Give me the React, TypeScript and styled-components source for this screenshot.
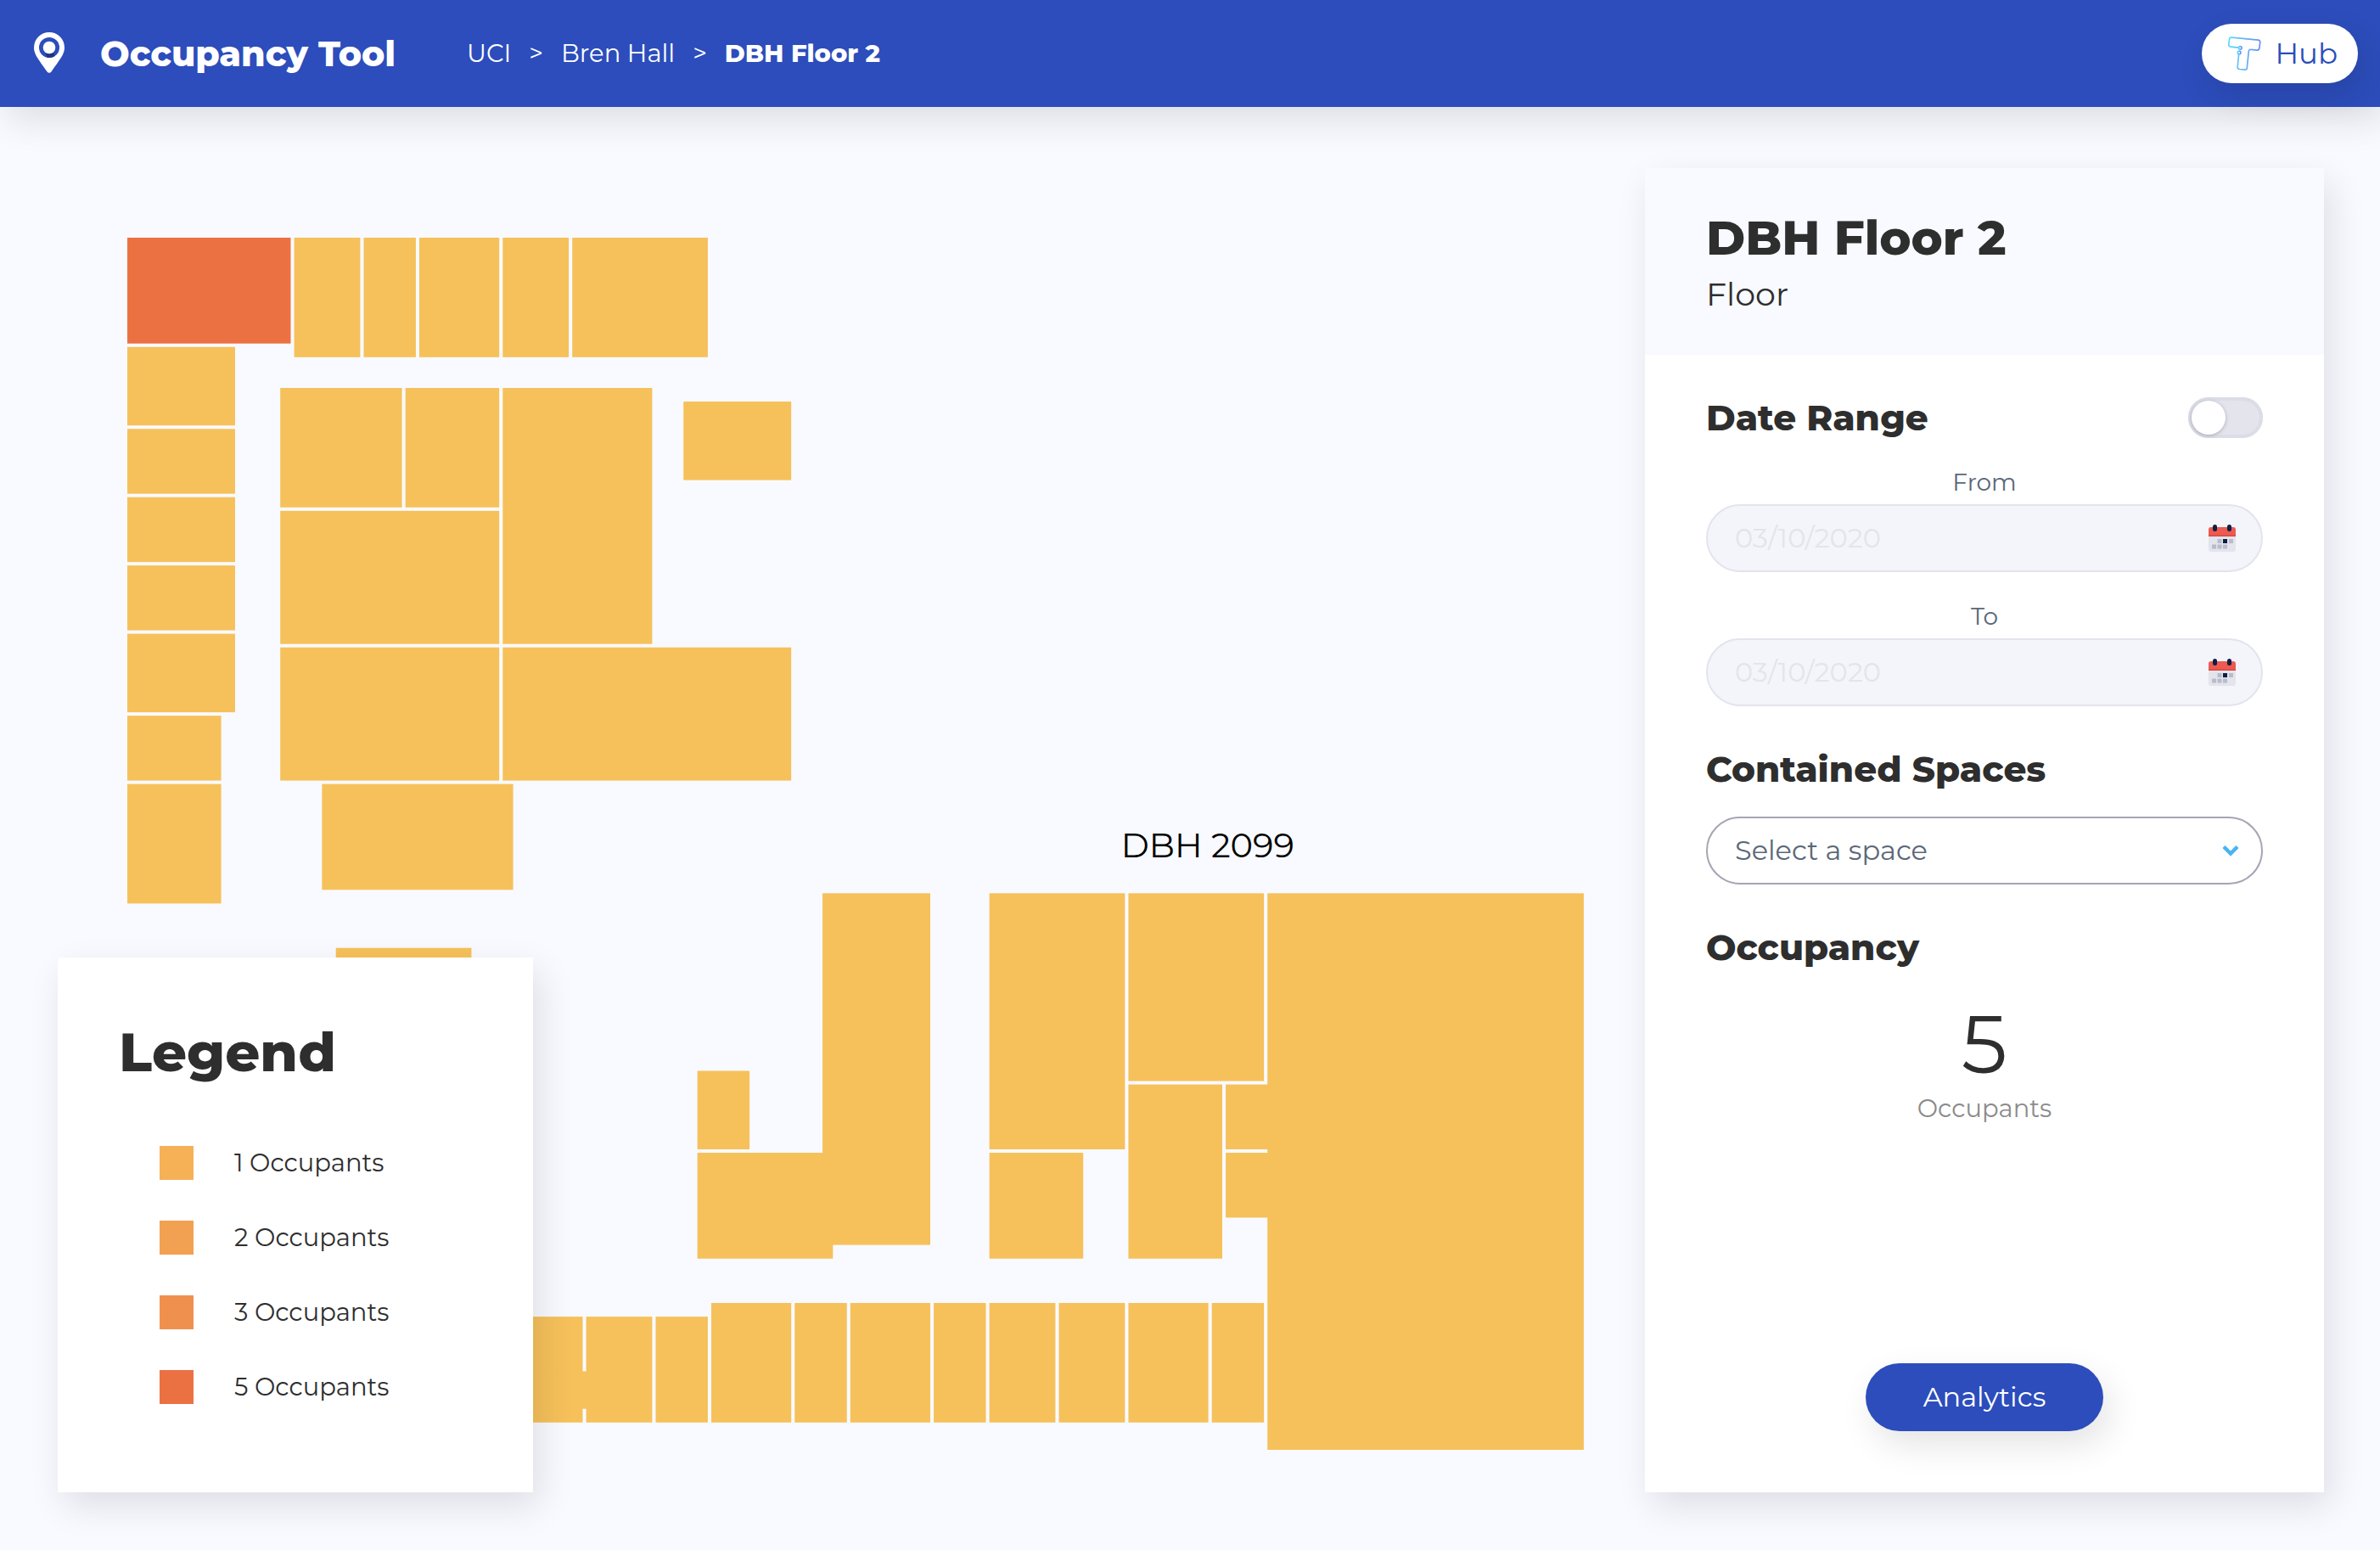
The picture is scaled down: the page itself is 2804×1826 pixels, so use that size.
import React, { useState } from "react";
import styled, { createGlobalStyle } from "styled-components";

const color = {
  primary: "#2c4dbb",
  page: "#f8faff",
  surface: "#ffffff",
  ink: "#2e2e2e",
  slate: "#5b6877",
  muted: "#8b8b8b",
  field: "#f4f5fa",
  line: "#e3e4ec",
  accent: "#4ab4f3",
};

const shadow = "8px 16px 40px rgba(0, 0, 0, 0.11)";

const GlobalStyle = createGlobalStyle`
  *, *::before, *::after { box-sizing: border-box; }
  body {
    margin: 0;
    background: ${color.page};
    color: ${color.ink};
    font-family: Montserrat, Inter, "Open Sans", sans-serif;
    font-size: 29px;
    line-height: 36px;
  }
  button, input, select { font: inherit; }
  h1, h2, h3, p, ul, ol { margin: 0; padding: 0; }
`;

const Page = styled.div`
  display: flex;
  flex-direction: column;
  min-height: 100vh;
`;

const Header = styled.header`
  display: flex;
  align-items: center;
  height: 126px;
  padding: 0 26px 0 40px;
  background: ${color.primary};
  color: #fff;
  box-shadow: ${shadow};
`;

const Brand = styled.div`
  display: flex;
  align-items: center;
  gap: 42px;
  width: 510px;
  white-space: nowrap;
`;

const AppName = styled.h1`
  font-size: 41px;
  line-height: 52px;
  font-weight: 800;
`;

const Breadcrumbs = styled.nav`
  flex: 1;
  ol {
    display: flex;
    gap: 21px;
    list-style: none;
  }
  li {
    display: flex;
    gap: 21px;
  }
  li + li::before {
    content: ">";
  }
`;

const Crumb = styled.a<{ $current?: boolean }>`
  color: inherit;
  text-decoration: none;
  font-weight: ${(p) => (p.$current ? 800 : 400)};
`;

const HubLink = styled.a`
  display: flex;
  align-items: center;
  gap: 16px;
  height: 70px;
  padding: 0 24px 0 30px;
  border-radius: 35px;
  background: ${color.surface};
  color: ${color.primary};
  font-size: 34px;
  text-decoration: none;
  box-shadow: ${shadow};
`;

const Main = styled.main`
  flex: 1;
  display: grid;
  grid-template-columns: minmax(0, 1fr) 800px;
  gap: 68px;
  padding: 72px 66px 68px 150px;
`;

const MapArea = styled.section`
  position: relative;
  display: flex;
  padding: 82px 0 46px;
`;

const Plan = styled.svg`
  flex: 1;
  width: 100%;
  overflow: visible;
`;

const RoomLabel = styled.text`
  font-size: 40px;
  fill: #000;
`;

const LegendCard = styled.aside`
  position: absolute;
  left: -82px;
  bottom: 0;
  width: 560px;
  padding: 72px 72px 104px;
  background: ${color.surface};
  box-shadow: ${shadow};
`;

const LegendTitle = styled.h2`
  font-size: 64px;
  line-height: 78px;
  font-weight: 800;
`;

const LegendList = styled.ul`
  display: grid;
  gap: 48px;
  padding: 72px 0 0 48px;
  list-style: none;
`;

const LegendItem = styled.li`
  display: flex;
  align-items: center;
  gap: 48px;
  height: 40px;
`;

const Swatch = styled.span<{ $fill: string }>`
  width: 40px;
  height: 40px;
  background: ${(p) => p.$fill};
`;

const Panel = styled.aside`
  display: flex;
  flex-direction: column;
  background: ${color.surface};
  box-shadow: ${shadow};
`;

const PanelHead = styled.header`
  padding: 48px 72px 38px;
  background: ${color.page};
`;

const SpaceName = styled.h2`
  font-size: 56px;
  line-height: 68px;
  font-weight: 800;
`;

const SpaceType = styled.p`
  font-size: 38px;
  line-height: 66px;
`;

const PanelBody = styled.div`
  flex: 1;
  display: flex;
  flex-direction: column;
  padding: 50px 72px 72px;
`;

const SectionRow = styled.div`
  display: flex;
  align-items: center;
  justify-content: space-between;
`;

const SectionTitle = styled.h3`
  font-size: 42px;
  line-height: 48px;
  font-weight: 800;
`;

const Switch = styled.input`
  appearance: none;
  display: flex;
  width: 88px;
  height: 48px;
  margin: 0;
  padding: 4px;
  border-radius: 24px;
  background: #e3e4ec;
  box-shadow: inset 0 0 0 4px #dbdde6;
  &::before {
    content: "";
    width: 40px;
    height: 40px;
    border-radius: 50%;
    background: #fff;
    box-shadow: 0 1px 4px rgba(60, 70, 90, 0.35);
  }
  &:checked {
    justify-content: flex-end;
    background: ${color.accent};
  }
`;

const Field = styled.div`
  display: flex;
  flex-direction: column;
  padding-top: 34px;
`;

const FieldLabel = styled.label`
  padding-bottom: 8px;
  color: ${color.slate};
  font-size: 28px;
  text-align: center;
`;

const DateBox = styled.div`
  display: flex;
  align-items: center;
  height: 80px;
  padding: 0 30px 0 32px;
  border: 2px solid ${color.line};
  border-radius: 40px;
  background: ${color.field};
`;

const DateInput = styled.input`
  flex: 1;
  min-width: 0;
  padding: 0;
  border: 0;
  background: transparent;
  color: ${color.line};
  font-size: 32px;
`;

const SelectBox = styled.div`
  display: grid;
  align-items: center;
  > * { grid-area: 1 / 1; }
  > svg {
    justify-self: end;
    margin-right: 28px;
    pointer-events: none;
  }
`;

const SpaceSelect = styled.select`
  appearance: none;
  width: 100%;
  height: 80px;
  padding: 0 72px 0 32px;
  border: 2px solid #a5a5b5;
  border-radius: 40px;
  background: ${color.surface};
  color: ${color.slate};
  font-size: 32px;
`;

const Section = styled.section`
  display: flex;
  flex-direction: column;
  gap: 32px;
  padding-top: 50px;
`;

const Count = styled.p`
  display: flex;
  flex-direction: column;
  align-items: center;
  color: ${color.muted};
  strong {
    color: ${color.ink};
    font-size: 96px;
    line-height: 116px;
    font-weight: 400;
  }
`;

const AnalyticsButton = styled.button`
  align-self: center;
  width: 280px;
  height: 80px;
  margin-top: auto;
  border: 0;
  border-radius: 40px;
  background: ${color.primary};
  color: #fff;
  font-size: 32px;
  box-shadow: ${shadow};
`;

const PinIcon = () => (
  <svg width="36" height="50" viewBox="0 0 36 50" aria-hidden="true">
    <path d="M18 0a18 18 0 0 0-18 18c0 7.500 4 12 15.500 28.500a3 3 0 0 0 5 0C32 30 36 25.500 36 18A18 18 0 0 0 18 0Z" fill="#fff" />
    <circle cx="18" cy="18" r="12" fill={color.primary} />
    <path d="M13.500 24a8 8 0 0 0 9.500-.5l1.500 4.500a12 12 0 0 1-9 1.700Z" fill="#1f3580" />
    <circle cx="18" cy="18" r="7.300" fill="#fff" />
  </svg>
);

const HubLogo = () => (
  <svg width="40" height="40" viewBox="0 1 38 38" fill="none" aria-hidden="true">
    <defs>
      <linearGradient id="hub" x1="0" y1="0" x2="1" y2="0">
        <stop offset="0" stopColor="#5bd8fb" />
        <stop offset="1" stopColor="#6a8ff5" />
      </linearGradient>
    </defs>
    <g stroke="url(#hub)" strokeWidth="1.600">
      <path d="M13 13.500 4 12.600Q1.500 12.300 1.700 10L2.400 4.200Q2.700 1.800 5 2L34.500 5Q37 5.300 36.800 7.500L36 14Q35.600 16.600 33 16.300L26.500 15.600Q24.200 15.400 24 17.700L22.200 36Q22 38.400 19.600 38.200L13.700 37.600Q11.400 37.300 11.600 35L13 20.500" />
      <circle cx="14.500" cy="13.700" r="1.700" />
      <circle cx="13.400" cy="19" r="1.700" />
    </g>
  </svg>
);

const CalendarIcon = () => (
  <svg width="32" height="32" viewBox="0 0 32 32" aria-hidden="true">
    <rect y="5" width="32" height="27" rx="3" fill="#e3e4ec" />
    <path d="M0 14V6a3 3 0 0 1 3-3h26a3 3 0 0 1 3 3v8Z" fill="#ec5a52" />
    <path d="M0 12.500h32v1.500H0z" fill="#d9483f" />
    <rect x="5" y="0" width="5" height="8" rx="2.500" fill="#0d1f44" />
    <rect x="22" y="0" width="5" height="8" rx="2.500" fill="#0d1f44" />
    <g fill="#b8bccb">
      <rect x="10.500" y="17" width="5" height="5" />
      <rect x="24" y="17" width="5" height="5" />
      <rect x="4" y="23.500" width="5" height="5" />
      <rect x="10.500" y="23.500" width="5" height="5" />
      <rect x="17" y="23.500" width="5" height="5" />
    </g>
    <rect x="17" y="17" width="5" height="5" fill="#0d1f44" />
  </svg>
);

const Chevron = () => (
  <svg width="20" height="14" viewBox="0 0 20 14" fill="none" aria-hidden="true">
    <path d="m2 2.500 8 8 8-8" stroke={color.accent} strokeWidth="4.500" />
  </svg>
);

/* Rooms as [x, y, width, height] on the building grid. */
type Room = [number, number, number, number];
const COLUMNS = 105;
const ROWS = 89;
const WALL = 0.25;

const rooms: Room[] = [
  [12, 0, 5, 9], [17, 0, 4, 9], [21, 0, 6, 9], [27, 0, 5, 9], [32, 0, 10, 9],
  [0, 8, 8, 6], [0, 14, 8, 5], [0, 19, 8, 5], [0, 24, 8, 5], [0, 29, 8, 6], [0, 35, 7, 5], [0, 40, 7, 9],
  [11, 11, 9, 9], [20, 11, 7, 9], [27, 11, 11, 19], [40, 12, 8, 6],
  [11, 20, 16, 10], [11, 30, 16, 10], [27, 30, 21, 10], [14, 40, 14, 8], [15, 52, 10, 6],
  [50, 48, 8, 26], [41, 61, 4, 6], [41, 67, 10, 8],
  [62, 48, 10, 19], [62, 67, 7, 8], [72, 48, 10, 14], [72, 62, 7, 13], [79, 62, 5, 5], [79, 67, 5, 5],
  [27, 79, 6, 8], [30, 83, 4, 3], [33, 79, 5, 8], [38, 79, 4, 8],
  [42, 78, 6, 9], [48, 78, 4, 9], [52, 78, 6, 9], [58, 78, 4, 9], [62, 78, 5, 9], [67, 78, 5, 9], [72, 78, 6, 9], [78, 78, 4, 9],
  [82, 48, 23, 41],
];
const busyRoom: Room = [0, 0, 12, 8];

const RoomShape = ({ room, fill }: { room: Room; fill: string }) => {
  const [x, y, w, h] = room;
  return (
    <rect
      x={`${(x / COLUMNS) * 100}%`}
      y={`${(y / ROWS) * 100}%`}
      width={`${((w - WALL) / COLUMNS) * 100}%`}
      height={`${((h - WALL) / ROWS) * 100}%`}
      fill={fill}
    />
  );
};

const levels = [
  { count: 1, fill: "#f6b156" },
  { count: 2, fill: "#f2a052" },
  { count: 3, fill: "#f0904e" },
  { count: 5, fill: "#ec7142" },
];

const DateField = ({ id, label }: { id: string; label: string }) => (
  <Field>
    <FieldLabel htmlFor={id}>{label}</FieldLabel>
    <DateBox>
      <DateInput id={id} type="text" defaultValue="03/10/2020" disabled />
      <CalendarIcon />
    </DateBox>
  </Field>
);

export default function App() {
  const [ranged, setRanged] = useState(false);
  return (
    <Page>
      <GlobalStyle />
      <Header>
        <Brand>
          <PinIcon />
          <AppName>Occupancy Tool</AppName>
        </Brand>
        <Breadcrumbs aria-label="Breadcrumb">
          <ol>
            <li><Crumb href="#uci">UCI</Crumb></li>
            <li><Crumb href="#bren-hall">Bren Hall</Crumb></li>
            <li><Crumb href="#floor-2" $current aria-current="page">DBH Floor 2</Crumb></li>
          </ol>
        </Breadcrumbs>
        <HubLink href="#hub-home">
          <HubLogo />
          Hub
        </HubLink>
      </Header>
      <Main>
        <MapArea>
          <Plan role="img" aria-label="Floor plan">
            <RoomShape room={busyRoom} fill="#ec7142" />
            {rooms.map((room) => (
              <RoomShape key={room.join("-")} room={room} fill="#f6c15b" />
            ))}
            <RoomLabel x="74%" y="51%" textAnchor="middle">DBH 2099</RoomLabel>
          </Plan>
          <LegendCard>
            <LegendTitle>Legend</LegendTitle>
            <LegendList>
              {levels.map((level) => (
                <LegendItem key={level.count}>
                  <Swatch $fill={level.fill} />
                  {level.count} Occupants
                </LegendItem>
              ))}
            </LegendList>
          </LegendCard>
        </MapArea>
        <Panel>
          <PanelHead>
            <SpaceName>DBH Floor 2</SpaceName>
            <SpaceType>Floor</SpaceType>
          </PanelHead>
          <PanelBody>
            <SectionRow>
              <SectionTitle><label htmlFor="range">Date Range</label></SectionTitle>
              <Switch id="range" type="checkbox" role="switch" checked={ranged} onChange={() => setRanged(!ranged)} />
            </SectionRow>
            <DateField id="from" label="From" />
            <DateField id="to" label="To" />
            <Section>
              <SectionTitle><label htmlFor="space">Contained Spaces</label></SectionTitle>
              <SelectBox>
                <SpaceSelect id="space">
                  <option>Select a space</option>
                </SpaceSelect>
                <Chevron />
              </SelectBox>
            </Section>
            <Section>
              <SectionTitle>Occupancy</SectionTitle>
              <Count>
                <strong>5</strong>
                Occupants
              </Count>
            </Section>
            <AnalyticsButton type="button">Analytics</AnalyticsButton>
          </PanelBody>
        </Panel>
      </Main>
    </Page>
  );
}
